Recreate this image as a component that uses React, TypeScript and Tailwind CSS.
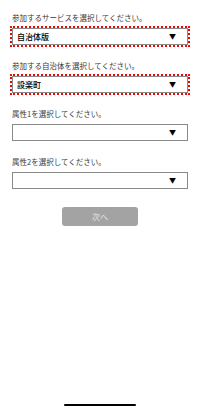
import React from "react";

const font = { fontFamily: '"Noto Sans CJK JP", "Noto Sans", sans-serif' };

function Field({ label, value, focused }: { label: string; value?: string; focused?: boolean }) {
  return (
    <div className="flex flex-col mb-[16px]">
      <div className="h-[10px] leading-[10px] text-[7.5px] text-[#3a3a3a] whitespace-nowrap">{label}</div>
      <div
        className={
          "mt-[5px] h-[17px] border border-[#8a8a8a] bg-white flex items-center justify-between pl-[4px] pr-[11px] " +
          (focused ? "outline-[2px] outline-dotted outline-[#ff0000]" : "")
        }
      >
        <span className="text-[8px] leading-[10px] text-black font-medium">{value ?? ""}</span>
        <span className="text-[7px] leading-[7px] text-black">▼</span>
      </div>
    </div>
  );
}

export default function App() {
  return (
    <div className="w-[200px] h-[411px] bg-white flex flex-col" style={font}>
      <div className="px-[12px] pt-[13px] flex flex-col">
        <Field label="参加するサービスを選択してください。" value="自治体版" focused />
        <Field label="参加する自治体を選択してください。" value="設楽町" focused />
        <Field label="属性1を選択してください。" />
        <Field label="属性2を選択してください。" />
        <div className="flex justify-center mt-[2px]">
          <div className="w-[76px] h-[19px] rounded-[3px] bg-[#a3a3a3] flex items-center justify-center text-[8px] text-[#e6e6e6]">
            次へ
          </div>
        </div>
      </div>
      <div className="flex-1" />
      <div className="flex justify-center mb-[5px]">
        <div className="w-[72px] h-[2px] rounded-full bg-black" />
      </div>
    </div>
  );
}
